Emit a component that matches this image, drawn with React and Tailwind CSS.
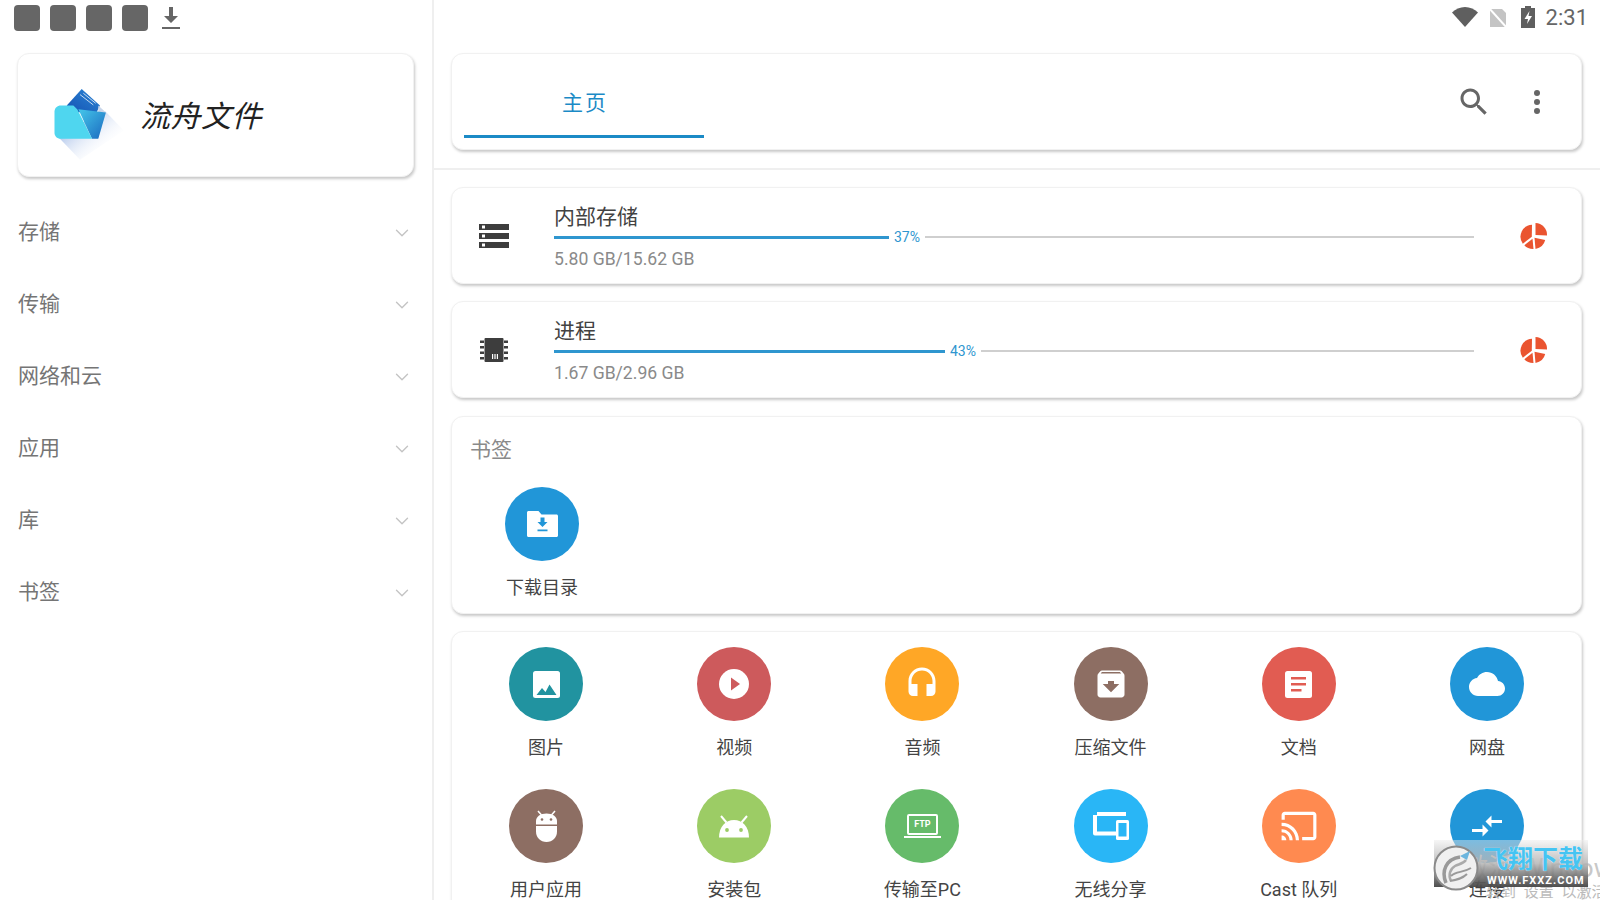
import React from "react";
import { ChevronDown } from "lucide-react";

const navItems = ["存储", "传输", "网络和云", "应用", "库", "书签"];

// material style glyphs, all white on a coloured disc
const ImageIcon = ({ fill }) => (
  <svg width="27" height="27" viewBox="0 0 27 27">
    <rect width="27" height="27" rx="2.5" fill="#fff" />
    <path d="M3.5 24l5.5-7 3.5 4 4-7.5 7 10.5z" fill={fill} />
  </svg>
);

const PlayIcon = ({ fill }) => (
  <svg width="30" height="30" viewBox="0 0 30 30">
    <circle cx="15" cy="15" r="15" fill="#fff" />
    <path d="M12 8.5l9 6.500-9 6.500z" fill={fill} />
  </svg>
);

const HeadsetIcon = () => (
  <svg width="36" height="36" viewBox="0 0 24 24" fill="#fff">
    <path d="M12 1c-4.970 0-9 4.030-9 9v7c0 1.660 1.340 3 3 3h3v-8H5v-2c0-3.870 3.130-7 7-7s7 3.130 7 7v2h-4v8h3c1.660 0 3-1.340 3-3v-7c0-4.970-4.030-9-9-9z" />
  </svg>
);

const ArchiveIcon = () => (
  <svg width="36" height="36" viewBox="0 0 24 24" fill="#fff">
    <path d="M20.540 5.230l-1.390-1.680C18.880 3.210 18.470 3 18 3H6c-.47 0-.88.21-1.160.55L3.460 5.230C3.170 5.570 3 6.020 3 6.500V19c0 1.100.9 2 2 2h14c1.100 0 2-.9 2-2V6.500c0-.48-.17-.93-.46-1.270zM12 17.500L6.500 12H10v-2h4v2h3.500L12 17.500zM5.120 5l.81-1h12l.94 1H5.120z" />
  </svg>
);

const DocIcon = ({ fill }) => (
  <svg width="27" height="27" viewBox="0 0 27 27">
    <rect width="27" height="27" rx="2.5" fill="#fff" />
    <path d="M6 6h15v2.500H6zM6 12h15v2.500H6zM6 18h10.500v2.500H6z" fill={fill} />
  </svg>
);

const CloudIcon = () => (
  <svg width="36" height="36" viewBox="0 0 24 24" fill="#fff">
    <path d="M19.350 10.040C18.670 6.590 15.640 4 12 4 9.110 4 6.600 5.640 5.350 8.040 2.340 8.360 0 10.910 0 14c0 3.310 2.690 6 6 6h13c2.760 0 5-2.240 5-5 0-2.640-2.050-4.780-4.650-4.960z" />
  </svg>
);

const UserAppIcon = ({ fill }) => (
  <svg width="23" height="32" viewBox="0 0 23 32">
    <path d="M3 1l3.500 4M20 1l-3.500 4" stroke="#fff" strokeWidth="1.500" />
    <path d="M1 14.500V11C1 6.500 5.500 3.500 11.500 3.500S22 6.500 22 11v3.500z" fill="#fff" />
    <path d="M1 16h21v5.500C22 27.500 17.500 32 11.500 32S1 27.500 1 21.500z" fill="#fff" />
    <circle cx="7" cy="9.500" r="1.300" fill={fill} />
    <circle cx="16" cy="9.500" r="1.300" fill={fill} />
  </svg>
);

const AndroidIcon = ({ fill }) => (
  <svg width="32" height="23" viewBox="0 0 32 23">
    <path d="M3 1l5.500 6.500M29 1l-5.500 6.500" stroke="#fff" strokeWidth="2" />
    <path d="M1 22.500C1 12 7.500 5 16 5s15 7 15 17.500z" fill="#fff" />
    <circle cx="9" cy="15" r="1.900" fill={fill} />
    <circle cx="23" cy="15" r="1.900" fill={fill} />
  </svg>
);

const FtpIcon = () => (
  <div className="flex w-[37px] flex-col items-center">
    <div className="flex h-[21px] w-[31px] items-center justify-center rounded-[2px] border-2 border-white text-[9px] leading-none font-bold text-white">
      FTP
    </div>
    <div className="mt-[1px] h-[2px] w-[37px] bg-white" />
  </div>
);

const DevicesIcon = ({ fill }) => (
  <svg width="36" height="28" viewBox="0 0 36 28">
    <path d="M4 2h29" stroke="#fff" strokeWidth="4" />
    <path d="M2 3v18.500h21" fill="none" stroke="#fff" strokeWidth="4" strokeLinejoin="round" />
    <rect x="23" y="8" width="13" height="20" rx="1.500" fill="#fff" />
    <rect x="25.500" y="11" width="8" height="13.500" fill={fill} />
  </svg>
);

const CastIcon = () => (
  <svg width="38" height="38" viewBox="0 0 24 24" fill="#fff">
    <path d="M21 3H3c-1.100 0-2 .9-2 2v3h2V5h18v14h-7v2h7c1.100 0 2-.9 2-2V5c0-1.100-.9-2-2-2zM1 18v3h3c0-1.660-1.340-3-3-3zm0-4v2c2.760 0 5 2.240 5 5h2c0-3.870-3.130-7-7-7zm0-4v2c4.970 0 9 4.030 9 9h2c0-6.080-4.930-11-11-11z" />
  </svg>
);

const CompareIcon = () => (
  <svg width="36" height="36" viewBox="0 0 24 24" fill="#fff">
    <path d="M9.010 14H2v2h7.010v3L13 15l-3.990-4v3zm5.980-1v-3H22V8h-7.010V5L11 9l3.990 4z" />
  </svg>
);

const FolderDownloadIcon = () => (
  <svg width="31" height="26" viewBox="0 0 31 26">
    <path d="M1.500 0h10l3 3.500h15c.8 0 1.500.7 1.500 1.500v19.500c0 .8-.7 1.500-1.500 1.500h-28C.7 26 0 25.300 0 24.500v-23C0 .7.7 0 1.500 0z" fill="#fff" />
    <path d="M13.500 6.500h4v4.500h3l-5 5-5-5h3zM10.500 18.500h10v1.800h-10z" fill="#2196d8" />
  </svg>
);

const tiles = [
  { label: "图片", color: "bg-[#2193a0]", icon: <ImageIcon fill="#2193a0" /> },
  { label: "视频", color: "bg-[#cd5a5c]", icon: <PlayIcon fill="#cd5a5c" /> },
  { label: "音频", color: "bg-[#ffa726]", icon: <HeadsetIcon /> },
  { label: "压缩文件", color: "bg-[#8d6e63]", icon: <ArchiveIcon /> },
  { label: "文档", color: "bg-[#e15c52]", icon: <DocIcon fill="#e15c52" /> },
  { label: "网盘", color: "bg-[#2196d8]", icon: <CloudIcon /> },
  { label: "用户应用", color: "bg-[#8d6e63]", icon: <UserAppIcon fill="#8d6e63" /> },
  { label: "安装包", color: "bg-[#9ccc65]", icon: <AndroidIcon fill="#9ccc65" /> },
  { label: "传输至PC", color: "bg-[#66bb6a]", icon: <FtpIcon /> },
  { label: "无线分享", color: "bg-[#29b6f6]", icon: <DevicesIcon fill="#29b6f6" /> },
  { label: "Cast 队列", color: "bg-[#ff8a50]", icon: <CastIcon /> },
  { label: "连接", color: "bg-[#2196d8]", icon: <CompareIcon /> },
];

const cardClass =
  "rounded-[12px] bg-white border border-[#f1f1f1] shadow-[1px_2px_3px_rgba(0,0,0,0.22)]";

const Tile = ({ label, color, icon }) => (
  <div className="flex flex-col items-center">
    <div className={`flex h-[74px] w-[74px] items-center justify-center rounded-full ${color}`}>
      {icon}
    </div>
    <span className="mt-[13px] text-[18px] leading-[28px] text-[#444]">{label}</span>
  </div>
);

const PieIcon = () => (
  <svg width="28" height="28" viewBox="0 0 28 28" fill="#ea5430">
    <path d="M12 2.700A12 12 0 0 0 2.800 21.700L11.800 14.800z" />
    <path d="M15.500 1A12 12 0 0 1 27 13.500L15.500 13z" />
    <path d="M4.300 23.300A12 12 0 0 0 13.500 27L12.500 16.700z" />
    <path d="M15.500 26.900A12 12 0 0 0 25.200 18L14.500 15.700z" />
  </svg>
);

const StorageIcon = () => (
  <svg width="36" height="36" viewBox="0 0 24 24" fill="#3d3d3d">
    <path d="M2 20h20v-4H2v4zm2-3h2v2H4v-2zM2 4v4h20V4H2zm4 3H4V5h2v2zm-4 7h20v-4H2v4zm2-3h2v2H4v-2z" />
  </svg>
);

const ChipIcon = () => (
  <svg width="28" height="24" viewBox="0 0 28 24" fill="#3d3d3d">
    <rect x="4.500" y="0" width="19" height="24" rx="1" />
    <path d="M0 2.500h4v2.500H0zM0 8h4v2.500H0zM0 13.500h4V16H0zM0 19h4v2.500H0zM24 2.500h4v2.500h-4zM24 8h4v2.500h-4zM24 13.500h4V16h-4zM24 19h4v2.500h-4z" />
    <path d="M12 16h1.200v5H12zM14.400 16h1.200v5h-1.200zM16.800 16H18v5h-1.200z" fill="#fff" />
  </svg>
);

const UsageCard = ({ icon, title, used, percent, barWidth, lineWidth }) => (
  <div className={`${cardClass} flex h-[97px] items-center`}>
    <div className="flex w-[102px] shrink-0 justify-center pr-[19px] pl-[1px]">{icon}</div>
    <div className="flex w-[920px] shrink-0 flex-col self-start pt-[16px]">
      <span className="text-[21px] leading-[26px] text-[#424242]">{title}</span>
      <div className="flex h-[14px] items-center">
        <div className="h-[3px] bg-[#2f96cf]" style={{ width: barWidth }} />
        <span className="mx-[5px] text-[14px] leading-none text-[#2f96cf]">{percent}</span>
        <div className="h-[2px] bg-[#cfcfcf]" style={{ width: lineWidth }} />
      </div>
      <span className="mt-[2px] text-[17.6px] leading-[26px] text-[#8a8a8a]">{used}</span>
    </div>
    <div className="flex flex-1 justify-center pl-[12px]">
      <PieIcon />
    </div>
  </div>
);

const AppLogo = () => (
  <svg className="mt-[15px] shrink-0" width="75" height="78" viewBox="60 40 225 235">
    <defs>
      <linearGradient id="logoShade" x1="0.150" y1="0.250" x2="0.800" y2="0.800">
        <stop offset="0" stopColor="#9fb9e6" />
        <stop offset="1" stopColor="#ffffff" stopOpacity="0" />
      </linearGradient>
      <linearGradient id="logoFlap" x1="0" y1="0" x2="1" y2="1">
        <stop offset="0" stopColor="#45c7ea" />
        <stop offset="1" stopColor="#1a68bf" />
      </linearGradient>
      <linearGradient id="logoPaper" x1="0" y1="1" x2="1" y2="0">
        <stop offset="0" stopColor="#1653b3" />
        <stop offset="1" stopColor="#2a86d6" />
      </linearGradient>
    </defs>
    <path d="M80 195L150 268 282 180 226 122 170 150z" fill="url(#logoShade)" />
    <path d="M155 55L210 105 200 125 140 125 110 105z" fill="url(#logoPaper)" />
    <path d="M150 72L190 103M160 68L197 98" stroke="#fff" strokeOpacity="0.75" strokeWidth="3" />
    <path d="M205 105L228 126 205 126z" fill="#c9d6ea" />
    <path d="M145 116L228 126 205 205 186 205z" fill="url(#logoFlap)" />
    <path d="M73 124C73 112 82 105 92 105H130L142 117 186 205H92C80 205 73 196 73 186z" fill="#4fd6ef" />
  </svg>
);

const StatusLeft = () => (
  <div className="flex h-[53px] items-start pt-[5px] pl-[14px]">
    <div className="flex gap-[10px]">
      <div className="h-[26px] w-[26px] rounded-[4px] bg-[#666]" />
      <div className="h-[26px] w-[26px] rounded-[4px] bg-[#666]" />
      <div className="h-[26px] w-[26px] rounded-[4px] bg-[#666]" />
      <div className="h-[26px] w-[26px] rounded-[4px] bg-[#666]" />
    </div>
    <svg className="mt-[2px] ml-[14px]" width="18" height="22" viewBox="0 0 18 22" fill="#666">
      <path d="M7 0h4v9h5l-7 7-7-7h5zM0 20h18v2H0z" />
    </svg>
  </div>
);

const StatusRight = () => (
  <div className="flex h-[53px] items-start justify-end pt-[6px] pr-[12px]">
    <svg className="mt-[1px]" width="26" height="20" viewBox="0 0 26 20" fill="#5f5f5f">
      <path d="M13 20L0 5.500C3.500 2.300 8 0 13 0s9.500 2.300 13 5.500z" />
    </svg>
    <svg className="mt-[2px] ml-[10px]" width="20" height="20" viewBox="0 0 20 20">
      <path d="M2 1h12l4 4v14H2z" fill="#c4c4c4" />
      <path d="M1 0l18 20" stroke="#fff" strokeWidth="2" />
    </svg>
    <svg className="ml-[13px]" width="14" height="22" viewBox="0 0 14 22">
      <path d="M4 0h6v2h4v20H0V2h4z" fill="#5f5f5f" />
      <path d="M8.500 5L3.500 13H7l-1 5 5-8H7.500z" fill="#fff" />
    </svg>
    <span className="ml-[11px] text-[22px] leading-[24px] text-[#666]">2:31</span>
  </div>
);

const Watermark = () => (
  <div className="absolute top-[840px] left-[1434px] h-[60px] w-[166px]">
    <span className="absolute top-[13px] left-[28px] text-[26px] leading-[30px] whitespace-nowrap text-[#c8c8c8]">
      激活 Windows
    </span>
    <span className="absolute top-[41px] left-[52px] text-[15px] leading-[22px] whitespace-nowrap text-[#bbb] [word-spacing:4px]">
      转到 设置 以激活
    </span>
    <div className="absolute top-0 left-0 flex h-[47px] w-[154px] bg-gradient-to-b from-[rgba(235,235,235,0.45)] via-[rgba(181,181,181,0.85)] to-[rgba(70,70,70,0.95)]">
      <svg className="absolute top-[5px] left-[-1px]" width="46" height="46" viewBox="0 0 46 46">
        <circle cx="23" cy="23" r="21.500" fill="#f0f0f0" stroke="#8a8a8a" strokeWidth="2" />
        <path d="M13 38C8 26 13 14 27 12" fill="none" stroke="#999" strokeWidth="3.500" />
        <path d="M18 36C15 30 17 24 22 21c4-2 8-2 11-6" fill="none" stroke="#aaa" strokeWidth="2.500" />
        <path d="M18 31c5-5 12-3 20-8M17 36c6-1 12-2 17-7" fill="none" stroke="#999" strokeWidth="2" />
        <path d="M27 11l10-5-3 9z" fill="#6bb5de" />
      </svg>
      <div className="ml-[49px] flex flex-col">
        <span className="mt-[6px] text-[25px] leading-[28px] font-bold whitespace-nowrap text-[#45c4f2] [text-shadow:0_0_1px_#fff]">
          飞翔下载
        </span>
        <span className="mt-[1px] ml-[4px] text-[11px] leading-[11px] font-bold tracking-[1px] whitespace-nowrap text-white">
          WWW.FXXZ.COM
        </span>
      </div>
    </div>
  </div>
);

const App = () => {
  return (
    <div className="relative flex h-[900px] w-[1600px] overflow-hidden bg-white font-['Roboto','Noto_Sans_CJK_SC',sans-serif]">
      <aside className="w-[434px] shrink-0 border-r-2 border-[#efefef]">
        <StatusLeft />
        <div className={`${cardClass} ml-[17px] flex h-[124px] w-[397px] items-center pl-[32px]`}>
          <AppLogo />
          <span className="mt-[4px] ml-[15px] text-[30px] leading-none tracking-[0.500px] text-[#222] italic">
            流舟文件
          </span>
        </div>
        <nav className="mt-[20px] flex flex-col">
          {navItems.map((item) => (
            <div key={item} className="flex h-[72px] items-center justify-between pr-[19px] pl-[18px]">
              <span className="text-[21px] text-[#757575]">{item}</span>
              <ChevronDown size={22} strokeWidth={1.5} color="#c4c4c4" />
            </div>
          ))}
        </nav>
      </aside>

      <main className="flex-1">
        <StatusRight />
        <div className="border-b-2 border-[#efefef] pr-[18px] pb-[18px] pl-[17px]">
          <div className={`${cardClass} flex h-[97px] items-stretch pl-[12px]`}>
            <div className="mt-[26px] flex h-[58px] w-[240px] items-start justify-center border-b-[3px] border-[#1b8ac6] pt-[9px] pl-[2px]">
              <span className="text-[21px] leading-[28px] tracking-[2px] text-[#1b8ac6]">主页</span>
            </div>
            <div className="ml-auto flex items-center gap-[42px] pr-[41px]">
              <svg width="36" height="36" viewBox="0 0 24 24" fill="#666">
                <path d="M15.500 14h-.79l-.28-.27C15.410 12.590 16 11.110 16 9.500 16 5.910 13.090 3 9.500 3S3 5.910 3 9.500 5.910 16 9.500 16c1.610 0 3.090-.59 4.230-1.570l.27.28v.79l5 4.990L20.490 19l-4.990-5zm-6 0C7.010 14 5 11.990 5 9.500S7.010 5 9.500 5 14 7.010 14 9.500 11.990 14 9.500 14z" />
              </svg>
              <div className="flex flex-col gap-[3px]">
                <div className="h-[6px] w-[6px] rounded-full bg-[#666]" />
                <div className="h-[6px] w-[6px] rounded-full bg-[#666]" />
                <div className="h-[6px] w-[6px] rounded-full bg-[#666]" />
              </div>
            </div>
          </div>
        </div>

        <div className="flex flex-col gap-[17px] pt-[17px] pr-[18px] pl-[17px]">
          <UsageCard
            icon={<StorageIcon />}
            title="内部存储"
            used="5.80 GB/15.62 GB"
            percent="37%"
            barWidth="335px"
            lineWidth="549px"
          />
          <UsageCard
            icon={<ChipIcon />}
            title="进程"
            used="1.67 GB/2.96 GB"
            percent="43%"
            barWidth="391px"
            lineWidth="493px"
          />

          <div className={`${cardClass} mt-[1px] h-[198px] pt-[19px]`}>
            <div className="pl-[18px] text-[21px] leading-[28px] text-[#8a8a8a]">书签</div>
            <div className="mt-[23px] ml-[16px] w-[148px]">
              <Tile label="下载目录" color="bg-[#2196d8]" icon={<FolderDownloadIcon />} />
            </div>
          </div>

          <div className={`${cardClass} pt-[15px] pb-[20px]`}>
            <div className="grid grid-cols-6 gap-y-[27px]">
              {tiles.map((tile) => (
                <Tile key={tile.label} {...tile} />
              ))}
            </div>
          </div>
        </div>
      </main>

      <Watermark />
    </div>
  );
};

export default App;
